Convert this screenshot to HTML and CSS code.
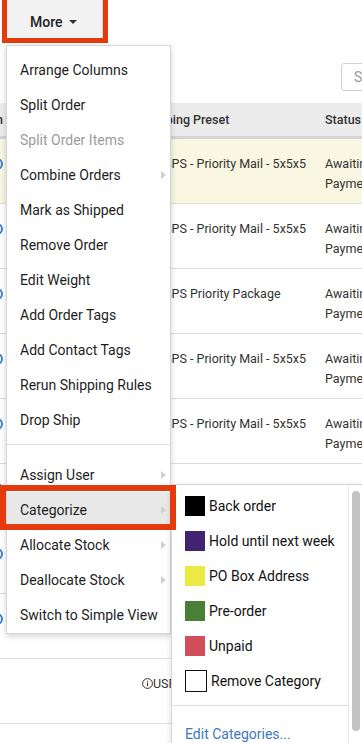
FILE: index.html
```html
<!DOCTYPE html>
<html lang="en">
<head>
    <meta charset="UTF-8">
    <meta name="viewport" content="width=device-width, initial-scale=1.0">
    <title>Orders</title>
    <link rel="stylesheet" href="styles.css">
</head>
<body>
    <div class="toolbar">
        <div class="more-wrap">
            <button class="more-btn">More <span class="caret"></span></button>
        </div>
        <input class="search" type="text" placeholder="Search orders">
    </div>

    <div class="orders">
        <div class="row head">
            <div class="cell first"><div class="edge"><span>Destination</span></div></div>
            <div class="cell preset">Shipping Preset</div>
            <div class="cell status">Status</div>
        </div>
        <div class="row flagged">
            <div class="cell first"><div class="edge"><span class="link-dot"></span></div></div>
            <div class="cell preset">USPS - Priority Mail - 5x5x5</div>
            <div class="cell status">Awaiting Payment</div>
        </div>
        <div class="row">
            <div class="cell first"><div class="edge"><span class="link-dot"></span></div></div>
            <div class="cell preset">USPS - Priority Mail - 5x5x5</div>
            <div class="cell status">Awaiting Payment</div>
        </div>
        <div class="row">
            <div class="cell first"><div class="edge"><span class="link-dot"></span></div></div>
            <div class="cell preset">USPS Priority Package</div>
            <div class="cell status">Awaiting Payment</div>
        </div>
        <div class="row">
            <div class="cell first"><div class="edge"><span class="link-dot"></span></div></div>
            <div class="cell preset">USPS - Priority Mail - 5x5x5</div>
            <div class="cell status">Awaiting Payment</div>
        </div>
        <div class="row">
            <div class="cell first"><div class="edge"><span class="link-dot"></span></div></div>
            <div class="cell preset">USPS - Priority Mail - 5x5x5</div>
            <div class="cell status">Awaiting Payment</div>
        </div>
        <div class="row">
            <div class="cell first"><div class="edge"><span class="link-dot"></span></div></div>
            <div class="cell preset"></div>
            <div class="cell status"></div>
        </div>
        <div class="row">
            <div class="cell first"><div class="edge"><span class="link-dot"></span></div></div>
            <div class="cell preset">USPS - Priority Mail - 5x5x5</div>
            <div class="cell status">Awaiting Payment</div>
        </div>
        <div class="row">
            <div class="cell first"><div class="edge"><span class="link-dot"></span></div></div>
            <div class="cell preset">USPS - Priority Mail - 5x5x5</div>
            <div class="cell status">Awaiting Payment</div>
        </div>
        <div class="row">
            <div class="cell first"></div>
            <div class="cell preset">
                <svg class="info" width="11" height="11" viewBox="0 0 11 11">
                    <circle cx="5.5" cy="5.5" r="4.9" fill="none" stroke="#333" stroke-width="1"/>
                    <rect x="5" y="4.6" width="1" height="3.6" fill="#333"/>
                    <rect x="5" y="2.7" width="1" height="1" fill="#333"/>
                </svg>USPS Ground Advantage
            </div>
            <div class="cell status">Awaiting Payment</div>
        </div>
        <div class="row">
            <div class="cell first"></div>
            <div class="cell preset"></div>
            <div class="cell status"></div>
        </div>
    </div>

    <!-- dropdown opened from the More button -->
    <div class="menu">
        <div class="menu-item">Arrange Columns</div>
        <div class="menu-item">Split Order</div>
        <div class="menu-item disabled">Split Order Items</div>
        <div class="menu-item">Combine Orders <span class="arrow"></span></div>
        <div class="menu-item">Mark as Shipped</div>
        <div class="menu-item">Remove Order</div>
        <div class="menu-item">Edit Weight</div>
        <div class="menu-item">Add Order Tags</div>
        <div class="menu-item">Add Contact Tags</div>
        <div class="menu-item">Rerun Shipping Rules</div>
        <div class="menu-item">Drop Ship</div>
        <div class="menu-sep"></div>
        <div class="menu-item">Assign User <span class="arrow"></span></div>
        <div class="menu-item active">Categorize <span class="arrow"></span></div>
        <div class="menu-item">Allocate Stock <span class="arrow"></span></div>
        <div class="menu-item">Deallocate Stock <span class="arrow"></span></div>
        <div class="menu-item">Switch to Simple View</div>
    </div>

    <div class="submenu">
        <div class="sub-list">
            <div class="sub-item"><span class="swatch black"></span>Back order</div>
            <div class="sub-item"><span class="swatch purple"></span>Hold until next week</div>
            <div class="sub-item"><span class="swatch yellow"></span>PO Box Address</div>
            <div class="sub-item"><span class="swatch green"></span>Pre-order</div>
            <div class="sub-item"><span class="swatch red"></span>Unpaid</div>
            <div class="sub-item"><span class="swatch none"></span>Remove Category</div>
            <div class="sub-sep"></div>
            <div class="sub-link">Edit Categories...</div>
        </div>
        <div class="scroll"><div class="thumb"></div></div>
    </div>

    <div class="callout callout-cat"></div>
</body>
</html>
```

FILE: styles.css
```css
* {
    margin: 0;
    padding: 0;
    box-sizing: border-box;
}

html, body {
    height: 100%;
    overflow: hidden;
}

body {
    font-family: Roboto, "Liberation Sans", Arial, sans-serif;
    font-size: 14px;
    color: #333;
    background: #fff;
    position: relative;
}

/* top bar */
.toolbar {
    display: flex;
    align-items: flex-start;
    height: 103px;
    padding-left: 2px;
}

.more-wrap {
    margin-top: -6px;
    border: 5px solid #e43b0e;
    flex-shrink: 0;
}

.more-btn {
    display: flex;
    align-items: center;
    width: 96px;
    height: 39px;
    padding: 7px 0 0 23px;
    background: #f2f2f2;
    border: none;
    border-right: 1px solid #d2d2d2;
    font-family: Roboto, "Liberation Sans", Arial, sans-serif;
    font-size: 14px;
    font-weight: 500;
    color: #222;
}

.caret {
    margin-left: 6px;
    border-top: 4px solid #333;
    border-left: 4px solid transparent;
    border-right: 4px solid transparent;
}

.search {
    flex-shrink: 0;
    margin: 63px 0 0 233px;
    width: 140px;
    height: 28px;
    border: 1px solid #cfcfcf;
    border-radius: 3px;
    padding-left: 12px;
    font-family: Roboto, "Liberation Sans", Arial, sans-serif;
    font-size: 14px;
}

.search::placeholder {
    color: #9a9a9a;
}

/* orders grid */
.row {
    display: grid;
    grid-template-columns: 131px 184px 90px;
    height: 65px;
    border-bottom: 1px solid #dddddd;
    font-size: 12.5px;
    line-height: 20px;
}

.row.head {
    height: 36px;
    background: #ececec;
    border-bottom: 3px solid #d4d4d4;
    align-items: center;
    font-weight: 500;
}

.row.flagged {
    background: #f9f6e2;
}

.cell {
    white-space: nowrap;
}

.row:not(.head) .cell {
    padding-top: 15px;
}

.cell.preset {
    padding-left: 25px;
}

.head .cell.preset {
    padding-left: 10px;
}

.cell.status {
    padding-left: 10px;
    white-space: normal;
}

.edge {
    width: 3px;
    display: flex;
    justify-content: flex-end;
    white-space: nowrap;
}

.link-dot {
    flex-shrink: 0;
    display: block;
    width: 12px;
    height: 12px;
    margin-top: 4px;
    border: 2px solid #3b7fd4;
    border-radius: 50%;
}

.info {
    margin-left: -14px;
    vertical-align: -1px;
}

/* dropdown */
.menu {
    position: absolute;
    left: 6px;
    top: 45px;
    width: 165px;
    padding: 6px 0 1px;
    background: #fff;
    border: 1px solid #d6d6d6;
    box-shadow: 0 2px 6px rgba(0, 0, 0, 0.18);
    z-index: 5;
}

.menu-item {
    display: flex;
    align-items: center;
    height: 35px;
    padding: 0 4px 0 13px;
    color: #1e1e1e;
    white-space: nowrap;
}

.menu-item.disabled {
    color: #9b9b9b;
}

.menu-item.active {
    background: #e8e8e8;
}

.menu-sep {
    height: 1px;
    margin: 7px 0 12px;
    background: #dedede;
}

.arrow {
    margin-left: auto;
    border-left: 5px solid #cfcfcf;
    border-top: 4.5px solid transparent;
    border-bottom: 4.5px solid transparent;
}

.submenu {
    position: absolute;
    left: 171px;
    top: 484px;
    width: 194px;
    height: 290px;
    display: flex;
    background: #fff;
    border: 1px solid #d6d6d6;
    box-shadow: 0 2px 6px rgba(0, 0, 0, 0.15);
    z-index: 6;
}

.sub-list {
    width: 176px;
    padding-top: 3px;
}

.sub-item {
    display: flex;
    align-items: center;
    height: 35px;
    padding-left: 13px;
    color: #111;
    white-space: nowrap;
}

.swatch {
    width: 20px;
    height: 20px;
    margin-right: 4px;
}

.swatch.black { background: #000; }
.swatch.purple { background: #41236f; }
.swatch.yellow { background: #ece844; }
.swatch.green { background: #4a7f37; }
.swatch.red { background: #d24e5b; }

.swatch.none {
    width: 22px;
    height: 22px;
    border: 1px solid #111;
}

.sub-sep {
    height: 1px;
    margin: 7px 0 11px;
    background: #dedede;
}

.sub-link {
    height: 35px;
    line-height: 35px;
    padding-left: 13px;
    color: #3e79c0;
}

.scroll {
    width: 16px;
    padding: 6px 0 0 3px;
    border-left: 1px solid #e6e6e6;
}

.thumb {
    width: 8px;
    height: 240px;
    border-radius: 4px;
    background: #c2c2c2;
}

/* red annotation box */
.callout {
    position: absolute;
    border: 6px solid #e43b0e;
    z-index: 10;
}

.callout-cat {
    left: 0;
    top: 485px;
    width: 176px;
    height: 45px;
}
```
